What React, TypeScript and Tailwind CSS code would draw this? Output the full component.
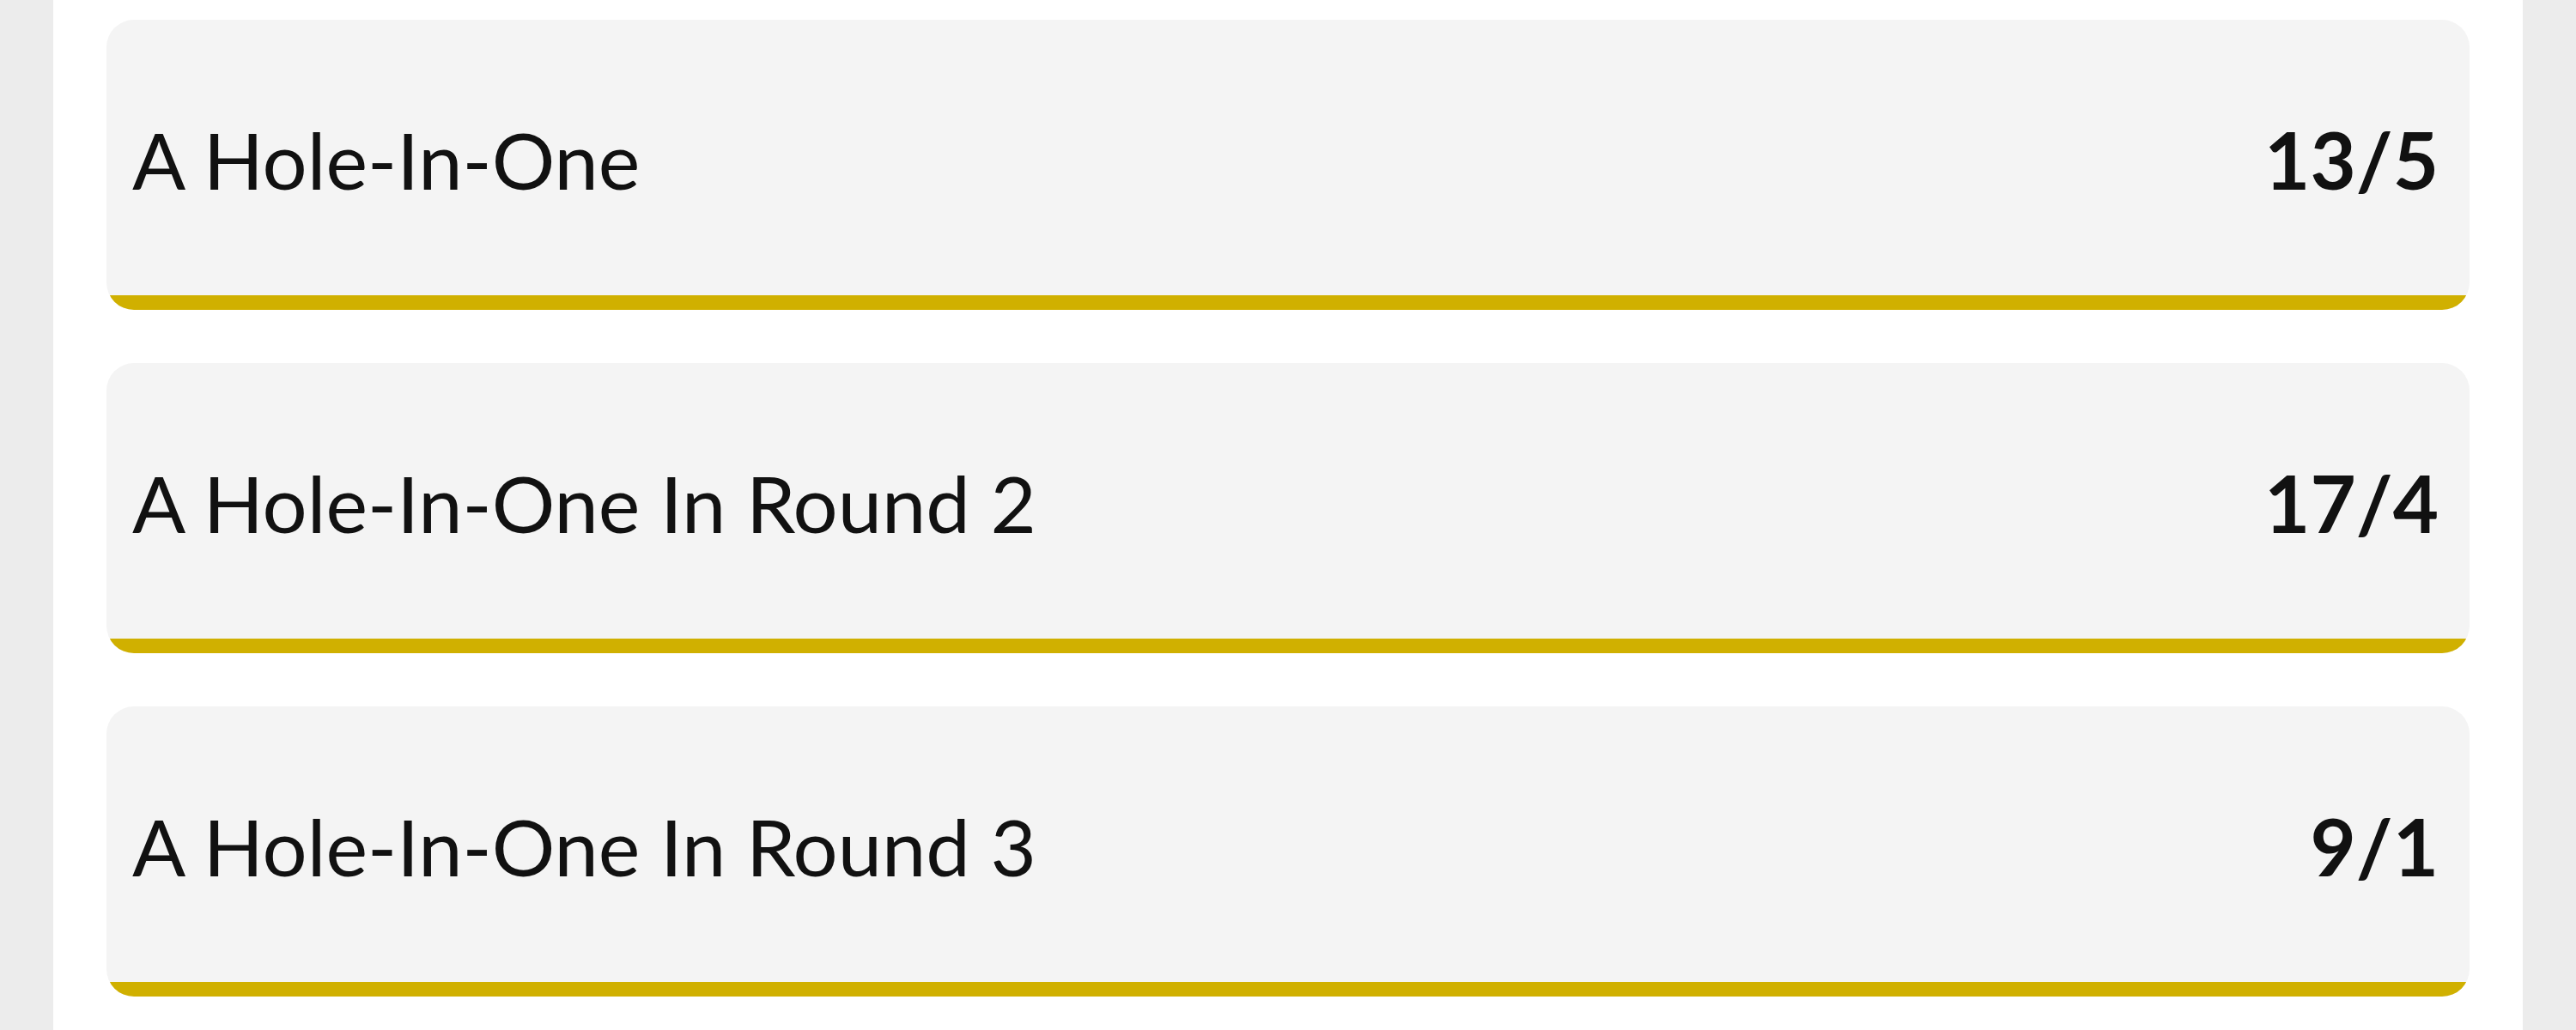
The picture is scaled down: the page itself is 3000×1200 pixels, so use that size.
import React from "react";

const rows = [
  { label: "A Hole-In-One", odds: "13/5" },
  { label: "A Hole-In-One In Round 2", odds: "17/4" },
  { label: "A Hole-In-One In Round 3", odds: "9/1" },
];

const App = () => {
  return (
    <div className="h-[1200px] overflow-hidden bg-[#ececec] px-[62px] font-['Lato',sans-serif] text-[#111111]">
      <div className="h-full bg-white px-[62px] pt-[23px] flex flex-col gap-[62px]">
        {rows.map((row) => (
          <div
            key={row.label}
            className="h-[338px] shrink-0 rounded-[32px] overflow-hidden bg-[#f4f4f4] flex flex-col"
          >
            <div className="flex-1 flex items-center justify-between pl-[30px] pr-[36px] pt-[4px]">
              <span className="text-[92px] leading-none">{row.label}</span>
              <span className="text-[92px] leading-none font-bold">{row.odds}</span>
            </div>
            <div className="h-[17px] bg-[#d0b000]" />
          </div>
        ))}
      </div>
    </div>
  );
};

export default App;
